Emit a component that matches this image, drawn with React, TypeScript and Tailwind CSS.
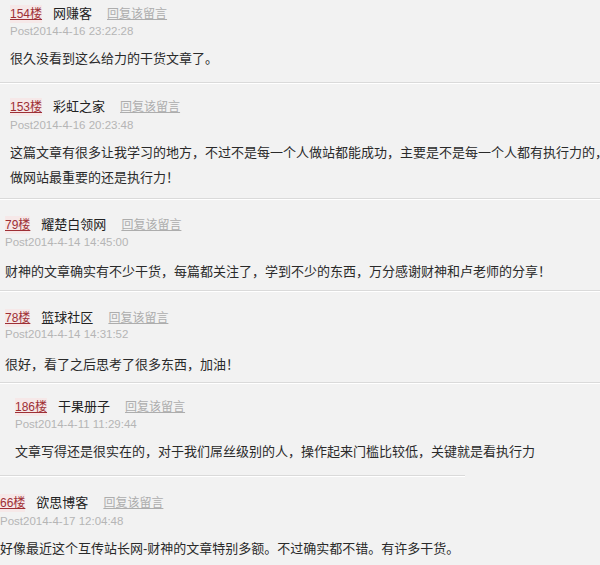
const comments = [
  {
    floor: '154楼',
    name: '网赚客',
    time: '2014-4-16 23:22:28',
    lines: ['很久没看到这么给力的干货文章了。'],
    indent: 'pl-[10px]',
    pad: 'pt-[5px] pb-[11px]',
    postGap: 'mt-[1px]',
    bodyGap: 'mt-[6px]',
    sep: 'w-full',
  },
  {
    floor: '153楼',
    name: '彩虹之家',
    time: '2014-4-16 20:23:48',
    lines: [
      '这篇文章有很多让我学习的地方，不过不是每一个人做站都能成功，主要是不是每一个人都有执行力的，',
      '做网站最重要的还是执行力！',
    ],
    indent: 'pl-[10px]',
    pad: 'pt-[14px] pb-[8px]',
    postGap: 'mt-[2px]',
    bodyGap: 'mt-[6px]',
    sep: 'w-full',
  },
  {
    floor: '79楼',
    name: '耀楚白领网',
    time: '2014-4-14 14:45:00',
    lines: ['财神的文章确实有不少干货，每篇都关注了，学到不少的东西，万分感谢财神和卢老师的分享！'],
    indent: 'pl-[5px]',
    pad: 'pt-[16px] pb-[6px]',
    postGap: 'mt-[1px]',
    bodyGap: 'mt-[8px]',
    sep: 'w-full',
  },
  {
    floor: '78楼',
    name: '篮球社区',
    time: '2014-4-14 14:31:52',
    lines: ['很好，看了之后思考了很多东西，加油！'],
    indent: 'pl-[5px]',
    pad: 'pt-[17px] pb-[5px]',
    postGap: 'mt-0',
    bodyGap: 'mt-[9px]',
    sep: 'w-full',
  },
  {
    floor: '186楼',
    name: '干果册子',
    time: '2014-4-11 11:29:44',
    lines: ['文章写得还是很实在的，对于我们屌丝级别的人，操作起来门槛比较低，关键就是看执行力'],
    indent: 'pl-[15px]',
    pad: 'pt-[14px] pb-[11px]',
    postGap: 'mt-[1px]',
    bodyGap: 'mt-[6px]',
    sep: 'w-[465px]',
  },
  {
    floor: '66楼',
    name: '欲思博客',
    time: '2014-4-17 12:04:48',
    lines: ['好像最近这个互传站长网-财神的文章特别多额。不过确实都不错。有许多干货。'],
    indent: 'pl-0',
    pad: 'pt-[17px] pb-[8px]',
    postGap: 'mt-[2px]',
    bodyGap: 'mt-[6px]',
    sep: '',
  },
];

export default function App() {
  return (
    <div className="w-[600px] h-[565px] overflow-hidden bg-[#f2f2f2] font-['Liberation_Sans','Noto_Sans_CJK_SC',sans-serif]">
      {comments.map((c) => (
        <div key={c.floor}>
          <div className={`${c.indent} ${c.pad}`}>
            {/* floor, nickname, reply link */}
            <div className="flex items-center h-[18px] whitespace-nowrap">
              <span className="text-[12px] text-[#9e2f35] underline bg-[#f6e8e8]">{c.floor}</span>
              <span className="ml-[11px] text-[13px] text-[#222]">{c.name}</span>
              <span className="ml-[15px] text-[12px] text-[#adadad] underline">回复该留言</span>
            </div>
            <div className={`${c.postGap} h-[16px] flex items-center text-[11.5px] text-[#b5b5b5] whitespace-nowrap`}>
              Post{c.time}
            </div>
            <div className={c.bodyGap}>
              {c.lines.map((l) => (
                <p key={l} className="h-[25px] leading-[25px] text-[13px] text-[#2a2a2a] whitespace-nowrap">
                  {l}
                </p>
              ))}
            </div>
          </div>
          {c.sep && (
            <div className={`${c.sep} h-[2px] border-t border-[#dadada] border-b border-b-white`} />
          )}
        </div>
      ))}
    </div>
  );
}
